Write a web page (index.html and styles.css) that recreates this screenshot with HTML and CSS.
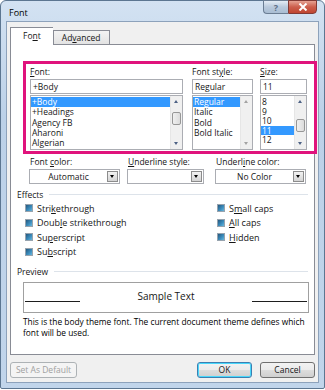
FILE: index.html
```html
<!DOCTYPE html>
<html lang="en">
<head>
    <meta charset="UTF-8">
    <title>Font</title>
    <link rel="stylesheet" href="styles.css">
</head>
<body>
    <div class="window">
        <div class="titlebar">
            <span class="title">Font</span>
            <div class="caption">
                <div class="cap help">?</div>
                <div class="cap close">
                    <svg width="10" height="8" viewBox="0 0 10 8"><path d="M1.5 0.5 L8.5 7.5 M8.5 0.5 L1.5 7.5" stroke="#fff" stroke-width="2"/></svg>
                </div>
            </div>
        </div>
        <div class="client">
            <div class="tabs">
                <div class="tab active">Fo<u>n</u>t</div>
                <div class="tab">Ad<u>v</u>anced</div>
            </div>
            <div class="panel">
                <!-- encadré rose autour des listes -->
                <div class="pick">
                    <div class="col col-font">
                        <div class="lbl"><u>F</u>ont:</div>
                        <div class="field">+Body</div>
                        <div class="list">
                            <div class="rows">
                                <div class="row sel">+Body</div>
                                <div class="row">+Headings</div>
                                <div class="row">Agency FB</div>
                                <div class="row">Aharoni</div>
                                <div class="row">Algerian</div>
                            </div>
                            <div class="scroll">
                                <div class="arrow up"></div>
                                <div class="track"><div class="thumb" style="margin-top: 5px"></div></div>
                                <div class="arrow down"></div>
                            </div>
                        </div>
                    </div>
                    <div class="col col-style">
                        <div class="lbl">Font st<u>y</u>le:</div>
                        <div class="field">Regular</div>
                        <div class="list">
                            <div class="rows">
                                <div class="row sel">Regular</div>
                                <div class="row">Italic</div>
                                <div class="row">Bold</div>
                                <div class="row">Bold Italic</div>
                            </div>
                            <div class="scroll off">
                                <div class="arrow up"></div>
                                <div class="track"></div>
                                <div class="arrow down"></div>
                            </div>
                        </div>
                    </div>
                    <div class="col col-size">
                        <div class="lbl"><u>S</u>ize:</div>
                        <div class="field">11</div>
                        <div class="list">
                            <div class="rows small">
                                <div class="row">8</div>
                                <div class="row">9</div>
                                <div class="row">10</div>
                                <div class="row sel">11</div>
                                <div class="row">12</div>
                            </div>
                            <div class="scroll">
                                <div class="arrow up"></div>
                                <div class="track"><div class="thumb" style="margin-top: 12px"></div></div>
                                <div class="arrow down"></div>
                            </div>
                        </div>
                    </div>
                </div>

                <div class="combos">
                    <div class="combo c1">
                        <div class="lbl">Font <u>c</u>olor:</div>
                        <div class="select"><span>Automatic</span><div class="drop"></div></div>
                    </div>
                    <div class="combo c2">
                        <div class="lbl"><u>U</u>nderline style:</div>
                        <div class="select"><span></span><div class="drop"></div></div>
                    </div>
                    <div class="combo c3">
                        <div class="lbl">Underl<u>i</u>ne color:</div>
                        <div class="select"><span>No Color</span><div class="drop"></div></div>
                    </div>
                </div>

                <div class="group">Effects</div>
                <div class="effects">
                    <div class="ecol">
                        <div class="check"><span class="box"></span>Stri<u>k</u>ethrough</div>
                        <div class="check"><span class="box"></span>Doub<u>l</u>e strikethrough</div>
                        <div class="check"><span class="box"></span>Su<u>p</u>erscript</div>
                        <div class="check"><span class="box"></span>Su<u>b</u>script</div>
                    </div>
                    <div class="ecol">
                        <div class="check"><span class="box"></span>S<u>m</u>all caps</div>
                        <div class="check"><span class="box"></span><u>A</u>ll caps</div>
                        <div class="check"><span class="box"></span><u>H</u>idden</div>
                    </div>
                </div>

                <div class="group preview-lbl">Preview</div>
                <div class="preview">
                    <div class="rule"></div>
                    <span>Sample Text</span>
                    <div class="rule"></div>
                </div>
                <p class="desc">This is the body theme font. The current document theme defines which font will be used.</p>
            </div>
            <div class="footer">
                <div class="btn disabled">Set As Default</div>
                <div class="btn ok">OK</div>
                <div class="btn">Cancel</div>
            </div>
        </div>
    </div>
</body>
</html>
```

FILE: styles.css
```css
body{
    margin: 0;
    width: 325px;
    height: 390px;
    overflow: hidden;
    background: #ffffff;
    font-family: "Open Sans", "Noto Sans", sans-serif;
    font-size: 8.5px;
    color: #161616;
}
u{
    text-decoration: underline;
    text-underline-offset: 1px;
}
.window{
    width: 323px;
    height: 387px;
    border: 1px solid #5c7691;
    border-radius: 6px 6px 2px 2px;
    background: linear-gradient(#d3e2f2, #bcd1e8 30%, #c1d5eb);
    display: flex;
    flex-direction: column;
}
.titlebar{
    height: 20px;
    display: flex;
    justify-content: space-between;
    align-items: flex-start;
}
.title{
    font-size: 9px;
    margin: 5px 0 0 8px;
    color: #000;
}
.caption{
    display: flex;
    margin-right: 7px;
    margin-top: -1px;
}
.cap{
    height: 14px;
    border: 1px solid #6b7d93;
    display: flex;
    align-items: center;
    justify-content: center;
    box-sizing: border-box;
}
.help{
    width: 25px;
    border-radius: 0 0 0 4px;
    border-right: none;
    background: linear-gradient(#e4ecf5, #b9c9dc 50%, #a9bdd3);
    color: #5d6f86;
    font-size: 9px;
    font-weight: bold;
}
.close{
    width: 29px;
    border-radius: 0 0 4px 0;
    border-color: #823a35;
    background: linear-gradient(#e6a293, #cc5e4c 50%, #c04631);
}
.client{
    flex: 1;
    margin: 0 5px 5px 5px;
    border: 1px solid #8da2bb;
    background: #f0f0f0;
    display: flex;
    flex-direction: column;
}
.tabs{
    display: flex;
    align-items: flex-end;
    margin: 5px 0 0 3px;
    height: 17px;
    position: relative;
    z-index: 1;
}
.tab{
    border: 1px solid #898c95;
    border-bottom: none;
    padding: 0 8px;
    height: 13px;
    line-height: 13px;
    background: linear-gradient(#f3f3f3, #e3e3e3);
    font-size: 8.5px;
}
.tab.active{
    height: 17px;
    line-height: 16px;
    background: #ffffff;
    padding: 0 12px;
    margin-bottom: -1px;
    border-right: none;
}
.panel{
    margin: 0 3px;
    height: 309px;
    border: 1px solid #898c95;
    background: #ffffff;
}
.pick{
    width: 284px;
    margin: 16px 0 0 12px;
    border: 3px solid #e0137c;
    display: flex;
    padding: 3px 0 1px 4px;
}
.lbl{
    height: 11px;
    line-height: 10px;
    margin-bottom: 1px;
    white-space: nowrap;
}
.field{
    height: 13px;
    border: 1px solid #abadb3;
    line-height: 13px;
    padding-left: 2px;
    background: #fff;
}
.list{
    margin-top: 1px;
    height: 53px;
    border: 1px solid #abadb3;
    display: flex;
    overflow: hidden;
}
.rows{
    flex: 1;
    padding-top: 1px;
}
.row{
    height: 10.25px;
    line-height: 10px;
    padding-left: 1px;
    white-space: nowrap;
}
.rows.small .row{
    height: 9.6px;
    line-height: 9.6px;
}
.row.sel{
    background: #3399ff;
    color: #ffffff;
}
.col-font{ width: 153px; }
.col-style{ width: 61px; margin-left: 9px; }
.col-size{ width: 47px; margin-left: 7px; }
.scroll{
    width: 11px;
    display: flex;
    flex-direction: column;
    background: #f0f0f0;
    border-left: 1px solid #e6e6e6;
}
.arrow{
    height: 11px;
    position: relative;
}
.arrow::after{
    content: "";
    position: absolute;
    left: 3px;
    border-left: 2.5px solid transparent;
    border-right: 2.5px solid transparent;
}
.arrow.up::after{
    top: 4px;
    border-bottom: 3px solid #4d6185;
}
.arrow.down::after{
    top: 4px;
    border-top: 3px solid #4d6185;
}
.scroll.off .arrow::after{
    border-top-color: #a3a3a3;
    border-bottom-color: #a3a3a3;
}
.track{
    flex: 1;
}
.thumb{
    height: 11px;
    margin: 0 1px;
    border: 1px solid #979797;
    border-radius: 2px;
    background: linear-gradient(90deg, #f0f0f0, #dcdcdc);
}
.combos{
    display: flex;
    margin: 3px 0 0 18px;
}
.combo .lbl{
    line-height: 10px;
    margin-left: 1px;
}
.c1{ width: 91px; }
.c2{ width: 77px; margin-left: 7px; }
.c3{ width: 91px; margin-left: 11px; }
.select{
    height: 13px;
    border: 1px solid #abadb3;
    display: flex;
    align-items: center;
}
.select span{
    flex: 1;
    text-align: center;
}
.drop{
    width: 9px;
    height: 9px;
    margin-right: 1px;
    border: 1px solid #8c8c8c;
    background: linear-gradient(#f2f2f2, #d4d4d4);
    position: relative;
}
.drop::after{
    content: "";
    position: absolute;
    left: 2px;
    top: 3px;
    border-left: 2.5px solid transparent;
    border-right: 2.5px solid transparent;
    border-top: 3px solid #000;
}
.group{
    display: flex;
    align-items: center;
    margin: 5px 6px 0 6px;
    height: 11px;
}
.group::after{
    content: "";
    flex: 1;
    margin-left: 6px;
    border-top: 1px solid #dde3ea;
}
.effects{
    display: grid;
    grid-template-columns: 192px auto;
    margin: 1px 0 0 14px;
    font-size: 9px;
}
.check{
    height: 14.5px;
    display: flex;
    align-items: center;
    white-space: nowrap;
}
.box{
    width: 6px;
    height: 6px;
    border: 1px solid #97a3ae;
    background: linear-gradient(135deg, #24577e, #3d8fbf 60%, #6ab7dc);
    margin-right: 4px;
}
.preview-lbl{
    margin-top: 7px;
}
.preview{
    margin: 5px 5px 0 12px;
    height: 29px;
    border: 1px solid #a0a0a0;
    display: flex;
    align-items: center;
    padding: 0 1px;
}
.preview span{
    font-size: 10px;
    margin: 0 auto;
    padding-bottom: 3px;
}
.rule{
    width: 55px;
    border-top: 1px solid #1e1e1e;
    margin-top: 8px;
}
.desc{
    margin: 3px 6px 0 12px;
    font-size: 8.4px;
    line-height: 11px;
    color: #000;
}
.footer{
    display: flex;
    margin: 7px 3px 0 3px;
}
.btn{
    width: 65px;
    height: 14px;
    line-height: 14px;
    text-align: center;
    border: 1px solid #707070;
    border-radius: 3px;
    background: linear-gradient(#f2f2f2, #ebebeb 50%, #dddddd 51%, #cfcfcf);
    font-size: 8.5px;
}
.btn.disabled{
    border-color: #adb2b5;
    background: #f4f4f4;
    color: #a0a0a0;
}
.btn.ok{
    width: 53px;
    margin-left: auto;
    border-color: #3c7fb1;
    box-shadow: inset 0 0 0 1px #48d7fb;
}
.btn:last-child{
    width: 53px;
    margin-left: 8px;
}
```
